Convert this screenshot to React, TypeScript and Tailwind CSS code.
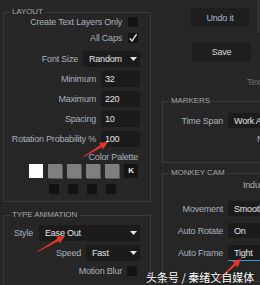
import React from 'react';

function Legend({ children }: { children: React.ReactNode }) {
  return (
    <legend className="ml-[6px] px-[2px] text-[8px] leading-[10px] tracking-[-0.1px] text-[#a6a6a6]">
      {children}
    </legend>
  );
}

function Caret() {
  return (
    <svg width="7" height="4" viewBox="0 0 7 4">
      <path d="M0 0h7L3.5 4z" fill="#e6e6e6" />
    </svg>
  );
}

function Select({ value, w, caret = true }: { value: string; w: string; caret?: boolean }) {
  return (
    <div className={`${w} h-full flex items-center justify-between bg-[#1b1b1b] pl-[6px] pr-[3px] text-[#e4e4e4]`}>
      <span className="whitespace-nowrap">{value}</span>
      {caret && <Caret />}
    </div>
  );
}

function Input({ value }: { value: string }) {
  return <div className="w-[39px] h-full flex items-center bg-[#1b1b1b] pl-[4px] text-[#e4e4e4]">{value}</div>;
}

function Check({ checked = false }: { checked?: boolean }) {
  return (
    <div className="w-[10px] h-[10px] bg-[#141414] flex items-center justify-center">
      {checked && (
        <svg width="10" height="10" viewBox="0 0 10 10">
          <path d="M1.8 5.4 L4 8 L8.6 1.2" fill="none" stroke="#f2f2f2" strokeWidth="1.3" />
        </svg>
      )}
    </div>
  );
}

function Arrow({ x1, y1, x2, y2 }: { x1: number; y1: number; x2: number; y2: number }) {
  const len = Math.hypot(x2 - x1, y2 - y1);
  const dx = (x2 - x1) / len;
  const dy = (y2 - y1) / len;
  const nx = -dy;
  const ny = dx;
  const bx = x2 - dx * 8;
  const by = y2 - dy * 8;
  const p = (x: number, y: number, k: number) => `${x + nx * k},${y + ny * k}`;
  const pts = [p(x1, y1, 0.4), p(bx, by, 1.3), p(bx, by, 3.8), `${x2},${y2}`, p(bx, by, -3.8), p(bx, by, -1.3), p(x1, y1, -0.4)];
  return <polygon points={pts.join(' ')} fill="#e8352b" />;
}

export default function App() {
  return (
    <div className="relative w-[260px] h-[285px] overflow-hidden bg-[#262626] font-['Liberation_Sans',sans-serif] text-[9px] leading-[10px] tracking-[-0.2px] text-[#a9b1bb]">
      <div className="flex">
        {/* left column */}
        <div className="w-[151px] shrink-0 pl-[3px] pt-[7px]">
          <fieldset className="w-[148px] border border-[#3a3a3a] pb-[7px]">
            <Legend>LAYOUT</Legend>
            <div className="h-[10px] flex items-center justify-end gap-[6px] pr-[12px]">
              <span>Create Text Layers Only</span>
              <Check />
            </div>
            <div className="mt-[6px] h-[10px] flex items-center justify-end gap-[6px] pr-[12px]">
              <span>All Caps</span>
              <Check checked />
            </div>
            <div className="mt-[8px] h-[16px] flex items-center justify-end gap-[5px] pr-[10px]">
              <span>Font Size</span>
              <Select value="Random" w="w-[57px]" />
            </div>
            <div className="mt-[4px] h-[16px] flex items-center justify-end gap-[5px] pr-[10px]">
              <span>Minimum</span>
              <Input value="32" />
            </div>
            <div className="mt-[4px] h-[16px] flex items-center justify-end gap-[5px] pr-[10px]">
              <span>Maximum</span>
              <Input value="220" />
            </div>
            <div className="mt-[4px] h-[16px] flex items-center justify-end gap-[5px] pr-[10px]">
              <span>Spacing</span>
              <Input value="10" />
            </div>
            <div className="mt-[4px] h-[16px] flex items-center justify-end gap-[5px] pr-[10px]">
              <span>Rotation Probability %</span>
              <Input value="100" />
            </div>
            <div className="mt-[5px] h-[10px] flex items-center justify-end pr-[12px]">Color Palette</div>
            <div className="mt-[2px] h-[14px] flex gap-[5px] pl-[25px]">
              <div className="w-[14px] h-[14px] bg-white" />
              <div className="w-[14px] h-[14px] bg-[#7f7f7f] shadow-[1px_1px_0_#555]" />
              <div className="w-[14px] h-[14px] bg-[#7f7f7f] shadow-[1px_1px_0_#555]" />
              <div className="w-[14px] h-[14px] bg-[#7f7f7f] shadow-[1px_1px_0_#555]" />
              <div className="w-[14px] h-[14px] bg-[#7f7f7f] shadow-[1px_1px_0_#555]" />
              <div className="w-[14px] h-[14px] bg-[#141414] flex items-center justify-center text-[8px] font-bold text-[#eee]">K</div>
            </div>
            <div className="mt-[6px] h-[10px] flex gap-[9px] pl-[45px]">
              <div className="w-[10px] h-[10px] bg-[#121212]" />
              <div className="w-[10px] h-[10px] bg-[#121212]" />
              <div className="w-[10px] h-[10px] bg-[#121212]" />
              <div className="w-[10px] h-[10px] bg-[#121212]" />
            </div>
          </fieldset>

          <fieldset className="mt-[8px] w-[148px] border border-[#3a3a3a] pb-[20px]">
            <Legend>TYPE ANIMATION</Legend>
            <div className="mt-[5px] h-[16px] flex items-center justify-end gap-[6px] pr-[10px]">
              <span>Style</span>
              <Select value="Ease Out" w="w-[101px]" />
            </div>
            <div className="mt-[4px] h-[16px] flex items-center justify-end gap-[5px] pr-[10px]">
              <span>Speed</span>
              <Select value="Fast" w="w-[54px]" />
            </div>
            <div className="mt-[5px] h-[10px] flex items-center justify-end gap-[5px] pr-[13px]">
              <span>Motion Blur</span>
              <Check />
            </div>
          </fieldset>
        </div>

        {/* right column, runs past the window edge */}
        <div className="ml-[11px] w-[160px] shrink-0">
          <div className="h-[33px] flex items-start">
            <button className="ml-[29px] mt-[8px] w-[58px] h-[19px] bg-[#1e1e1e] text-[#a9b9ca]">Undo it</button>
            <div className="ml-[8px] w-[4px] h-[33px] bg-[#333333]" />
          </div>
          <button className="block mt-[9px] ml-[30px] w-[59px] h-[20px] bg-[#1e1e1e] text-[#d8d8d8]">Save</button>
          <div className="mt-[15px] h-[10px] pl-[85px] text-[#6f6f6f] whitespace-nowrap">Text Style</div>

          <fieldset className="mt-[9px] w-[150px] border border-[#3a3a3a] pb-[18px]">
            <Legend>MARKERS</Legend>
            <div className="mt-[7px] h-[15px] flex items-center gap-[5px]">
              <span className="w-[60px] text-right">Time Span</span>
              <Select value="Work Area" w="w-[60px]" caret={false} />
            </div>
            <div className="mt-[6px] h-[10px] pl-[94px] whitespace-nowrap">New Markers</div>
          </fieldset>

          <fieldset className="mt-[5px] w-[150px] border border-[#3a3a3a] pb-[20px]">
            <Legend>MONKEY CAM</Legend>
            <div className="mt-[2px] h-[10px] pl-[80px] whitespace-nowrap">Inductive</div>
            <div className="mt-[11px] h-[15px] flex items-center gap-[5px]">
              <span className="w-[60px] text-right">Movement</span>
              <Select value="Smooth" w="w-[60px]" caret={false} />
            </div>
            <div className="mt-[7px] h-[15px] flex items-center gap-[5px]">
              <span className="w-[60px] text-right whitespace-nowrap">Auto Rotate</span>
              <Select value="On" w="w-[60px]" caret={false} />
            </div>
            <div className="mt-[7px] h-[16px] flex items-center gap-[5px]">
              <span className="w-[60px] text-right whitespace-nowrap">Auto Frame</span>
              <div className="w-[60px] h-full border-b border-[#3d8fd6]">
                <Select value="Tight" w="w-[60px]" caret={false} />
              </div>
            </div>
          </fieldset>
        </div>
      </div>

      {/* annotations */}
      <svg className="absolute inset-0 pointer-events-none" width="260" height="285">
        <Arrow x1={83} y1={157} x2={108} y2={142} />
        <Arrow x1={37} y1={252} x2={65} y2={236} />
        <Arrow x1={217} y1={281} x2={241} y2={259} />
      </svg>
      <div className="absolute left-[146px] top-[271px] text-[11px] leading-[13px] tracking-normal text-white font-['Noto_Sans_CJK_SC',sans-serif] [text-shadow:0_0_2px_rgba(0,0,0,0.6)] whitespace-nowrap">
        头条号 / 秦绪文自媒体
      </div>
    </div>
  );
}
